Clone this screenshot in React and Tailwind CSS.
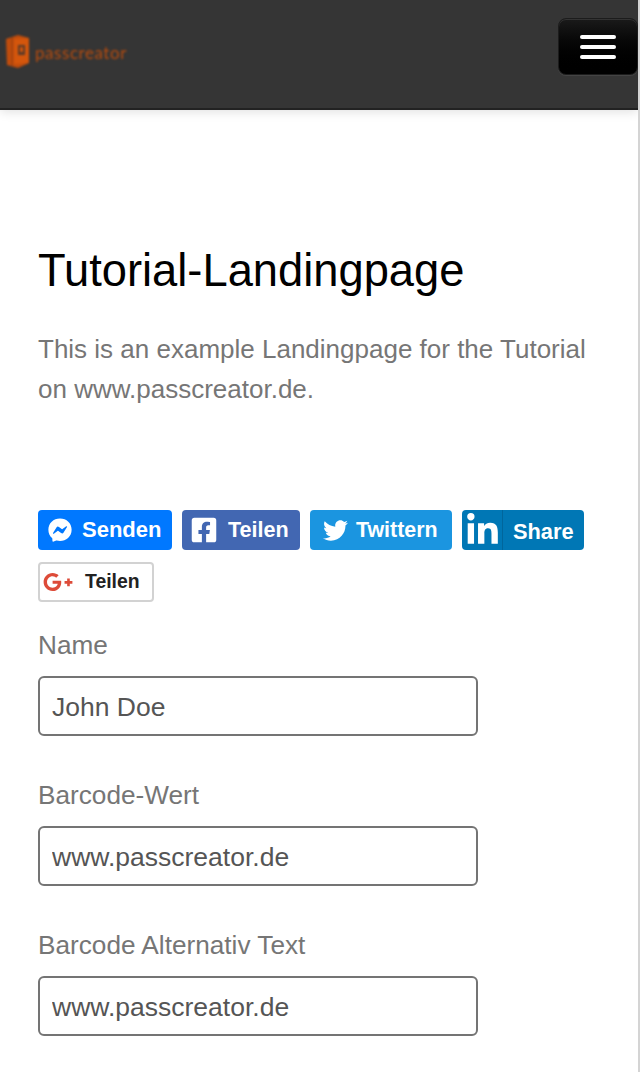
import { FaFacebookMessenger, FaFacebookSquare, FaTwitter, FaLinkedinIn, FaGooglePlusG } from "react-icons/fa";

const fields = [
  { label: "Name", value: "John Doe" },
  { label: "Barcode-Wert", value: "www.passcreator.de" },
  { label: "Barcode Alternativ Text", value: "www.passcreator.de" },
];

const Logo = () => (
  <div className="flex items-center blur-[0.8px]">
    <svg width="26" height="36" viewBox="0 0 26 36" className="ml-[5px]">
      <path d="M1 5 L13 1 L24 4 L24 29 L13 34 L2 31 Z" fill="#c24d0c" />
      <path d="M9 5 L24 4 L24 29 L9 30 Z" fill="#d4560c" />
      <rect x="13" y="11" width="7" height="10" fill="#5a3a28" />
      <rect x="15" y="13" width="3" height="5" fill="#d4560c" />
      <path d="M7 3 L7 32" stroke="#8f3d10" strokeWidth="1" />
    </svg>
    <span className="ml-[4px] text-[17px] leading-none text-[#b84c0e] font-['Lato',sans-serif] tracking-[0.55px]">
      passcreator
    </span>
  </div>
);

const App = () => {
  return (
    <div className="w-[640px] h-[1072px] overflow-hidden bg-white border-r-2 border-[#d4d4d4] font-['Liberation_Sans',sans-serif]">
      {/* HEADER */}
      <header className="h-[110px] bg-[#353535] border-b-2 border-[#222] flex justify-between items-start shadow-[0_2px_10px_rgba(0,0,0,0.12)]">
        <div className="pt-[34px]">
          <Logo />
        </div>
        <button className="mt-[18px] w-[80px] h-[57px] rounded-lg border border-[#1c1c1c] bg-gradient-to-b from-[#1a1a1a] to-black flex flex-col items-center justify-center gap-[6px] shadow-[0_1px_0_#444,inset_0_1px_0_#333]">
          <span className="block w-[36px] h-[4px] rounded-sm bg-white" />
          <span className="block w-[36px] h-[4px] rounded-sm bg-white" />
          <span className="block w-[36px] h-[4px] rounded-sm bg-white" />
        </button>
      </header>

      {/* MAIN */}
      <main className="px-[38px] pt-[131px]">
        <h1 className="text-[45.3px] leading-[60px] text-black">Tutorial-Landingpage</h1>
        <p className="mt-[28px] text-[26px] leading-[40px] text-[#767676]">
          This is an example Landingpage for the Tutorial on www.passcreator.de.
        </p>

        {/* SHARE BUTTONS */}
        <div className="mt-[101px] flex flex-wrap gap-x-[10px] gap-y-[12px] w-[560px]">
          <div className="h-[40px] w-[134px] rounded bg-[#0078ff] text-white flex items-center pl-[10px] gap-[10px] text-[22px] font-bold">
            <FaFacebookMessenger size={24} />
            <span className="-mt-[2px]">Senden</span>
          </div>
          <div className="h-[40px] w-[118px] rounded bg-[#4267b2] text-white flex items-center pl-[8px] gap-[10px] text-[21.6px] font-bold">
            <FaFacebookSquare size={28} />
            <span>Teilen</span>
          </div>
          <div className="h-[40px] w-[142px] rounded bg-[#1b95e0] text-white flex items-center pl-[13px] gap-[8px] text-[21.4px] font-bold">
            <FaTwitter size={25} />
            <span>Twittern</span>
          </div>
          <div className="h-[40px] w-[122px] rounded bg-[#0077b5] text-white flex items-center text-[21.8px] font-bold">
            <div className="w-[41px] h-full flex items-center justify-center border-r border-[#00669c]">
              <FaLinkedinIn size={35} />
            </div>
            <span className="ml-[10px] mt-[5px]">Share</span>
          </div>
          <div className="h-[40px] w-[116px] rounded-sm border-2 border-[#d2d2d2] bg-white text-[#222] flex items-center pl-[3px] gap-[12px] text-[19.4px] font-bold">
            <FaGooglePlusG size={30} className="text-[#dd4b39]" />
            <span>Teilen</span>
          </div>
        </div>

        {/* FORM */}
        <form className="mt-[23px] flex flex-col gap-[39px]">
          {fields.map((f) => (
            <div key={f.label}>
              <label className="block text-[26.2px] leading-[40px] text-[#767676] mb-[11px]">{f.label}</label>
              <input
                readOnly
                value={f.value}
                className="block w-[440px] h-[60px] px-[12px] pt-[2px] border-2 border-[#747474] rounded-md bg-white text-[26.5px] text-[#555] outline-none"
              />
            </div>
          ))}
        </form>
      </main>
    </div>
  );
};

export default App;
